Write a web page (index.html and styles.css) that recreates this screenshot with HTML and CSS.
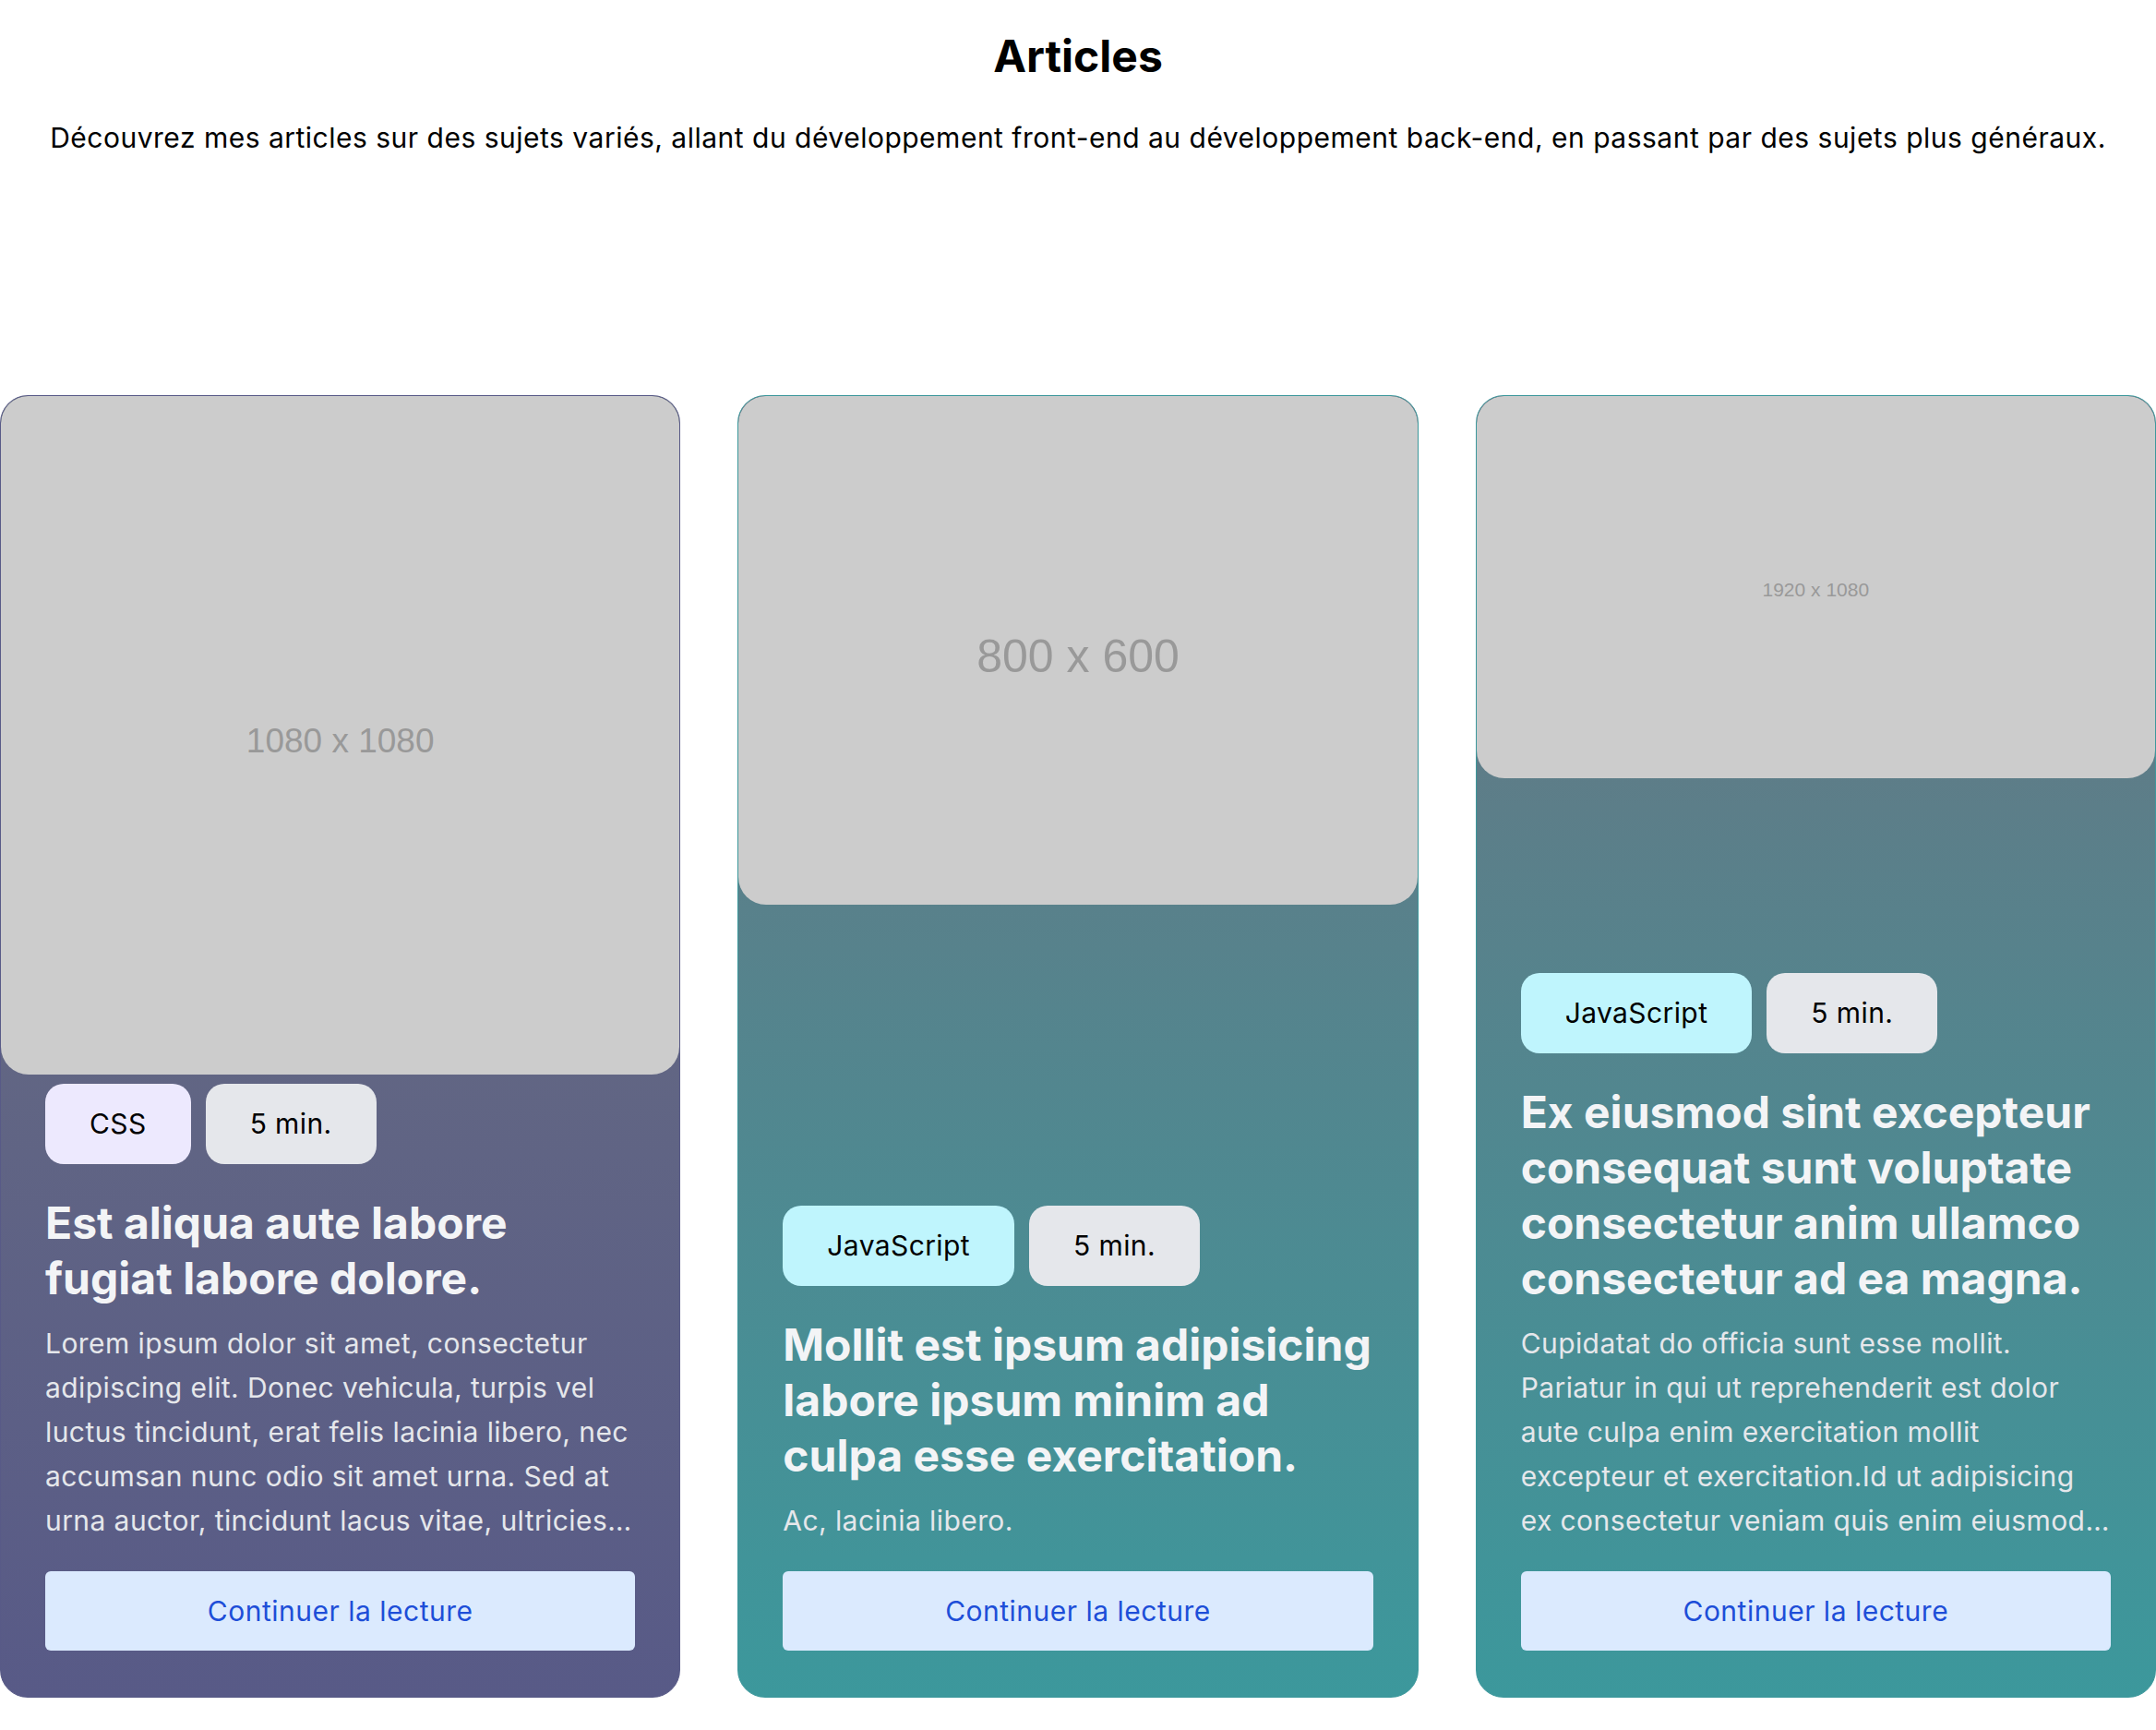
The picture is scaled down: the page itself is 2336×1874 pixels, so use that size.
FILE: index.html
```html
<!DOCTYPE html>
<html lang="fr">
<head>
<meta charset="utf-8">
<title>Articles</title>
<link rel="stylesheet" href="styles.css">
</head>
<body>
<header class="intro">
  <h1 class="intro-title">Articles</h1>
  <p class="intro-text">Découvrez mes articles sur des sujets variés, allant du développement front-end au développement back-end, en passant par des sujets plus généraux.</p>
</header>
<main class="grid">
  <article class="card card-indigo">
    <div class="thumb thumb-square"><span class="thumb-label thumb-label-md">1080 x 1080</span></div>
    <div class="body">
      <div class="tags">
        <span class="tag tag-css">CSS</span>
        <span class="tag tag-time">5 min.</span>
      </div>
      <h2 class="title">Est aliqua aute labore fugiat labore dolore.</h2>
      <p class="desc">Lorem ipsum dolor sit amet, consectetur adipiscing elit. Donec vehicula, turpis vel luctus tincidunt, erat felis lacinia libero, nec accumsan nunc odio sit amet urna. Sed at urna auctor, tincidunt lacus vitae, ultricies nisl. Aliquam erat volutpat, nullam quis ante sed lorem.</p>
      <a class="btn" href="#">Continuer la lecture</a>
    </div>
  </article>
  <article class="card card-teal">
    <div class="thumb thumb-43"><span class="thumb-label thumb-label-lg">800 x 600</span></div>
    <div class="body">
      <div class="tags">
        <span class="tag tag-js">JavaScript</span>
        <span class="tag tag-time">5 min.</span>
      </div>
      <h2 class="title">Mollit est ipsum adipisicing labore ipsum minim ad culpa esse exercitation.</h2>
      <p class="desc">Ac, lacinia libero.</p>
      <a class="btn" href="#">Continuer la lecture</a>
    </div>
  </article>
  <article class="card card-teal">
    <div class="thumb thumb-169"><span class="thumb-label thumb-label-sm">1920 x 1080</span></div>
    <div class="body">
      <div class="tags">
        <span class="tag tag-js">JavaScript</span>
        <span class="tag tag-time">5 min.</span>
      </div>
      <h2 class="title">Ex eiusmod sint excepteur consequat sunt voluptate consectetur anim ullamco consectetur ad ea magna.</h2>
      <p class="desc">Cupidatat do officia sunt esse mollit. Pariatur in qui ut reprehenderit est dolor aute culpa enim exercitation mollit excepteur et exercitation.Id ut adipisicing ex consectetur veniam quis enim eiusmod ad ipsum nulla aliqua laboris proident velit.</p>
      <a class="btn" href="#">Continuer la lecture</a>
    </div>
  </article>
</main>
</body>
</html>
```
FILE: styles.css
```css
* { box-sizing: border-box; }

body {
  margin: 0;
  background: #ffffff;
  color: #000000;
  font-family: Inter, "Noto Sans", "Liberation Sans", sans-serif;
}

.intro {
  text-align: center;
  padding-top: 32px;
}

.intro-title {
  margin: 0;
  font-size: 48px;
  line-height: 58px;
  font-weight: 700;
}

.intro-text {
  margin: 41px 0 0;
  font-size: 30px;
  line-height: 36px;
  letter-spacing: 0.5px;
}

.grid {
  margin-top: 261px;
  display: grid;
  grid-template-columns: repeat(3, 1fr);
  column-gap: 62px;
  align-items: stretch;
}

.card {
  display: flex;
  flex-direction: column;
  border: 1px solid;
  border-radius: 30px;
  overflow: hidden;
}

.card-indigo {
  border-color: #585a87;
  background: linear-gradient(to bottom, #6b7280, #585a87);
}

.card-teal {
  border-color: #3c989c;
  background: linear-gradient(to bottom, #6b7280, #3c989c);
}

.thumb {
  width: 100%;
  background: #cccccc;
  border-radius: 30px;
  display: flex;
  align-items: center;
  justify-content: center;
}

.thumb-square { aspect-ratio: 1 / 1; }
.thumb-43 { aspect-ratio: 4 / 3; }
.thumb-169 { aspect-ratio: 16 / 9; }

.thumb-label {
  font-family: "Liberation Sans", Arial, sans-serif;
  color: #999999;
}

.thumb-label-sm { font-size: 21px; padding-top: 6px; }
.thumb-label-md { font-size: 37px; padding-top: 12px; }
.thumb-label-lg { font-size: 50px; padding-top: 12px; }

.body {
  margin-top: auto;
  padding: 10px 48px 50px;
  display: flex;
  flex-direction: column;
}

.tags {
  display: flex;
  gap: 16px;
}

.tag {
  font-size: 30px;
  line-height: 36px;
  padding: 25px 48px 26px;
  border-radius: 20px;
  color: #000000;
  letter-spacing: 0.4px;
}

.tag-css { background: #ede9fe; }
.tag-js { background: #bff5fd; }
.tag-time { background: #e5e7eb; }

.title {
  margin: 34px 0 0;
  font-size: 48px;
  line-height: 60px;
  font-weight: 700;
  color: #f3f4f6;
}

.desc {
  margin: 16px 0 0;
  font-size: 30px;
  line-height: 48px;
  color: #e5e7eb;
  letter-spacing: 0.42px;
  display: -webkit-box;
  -webkit-line-clamp: 5;
  -webkit-box-orient: vertical;
  overflow: hidden;
}

.btn {
  margin-top: 31px;
  display: block;
  text-align: center;
  text-decoration: none;
  background: #dbeafe;
  color: #1d4ed8;
  font-size: 30px;
  line-height: 36px;
  padding: 25px 16px;
  border-radius: 6px;
  letter-spacing: 0.5px;
}
```
